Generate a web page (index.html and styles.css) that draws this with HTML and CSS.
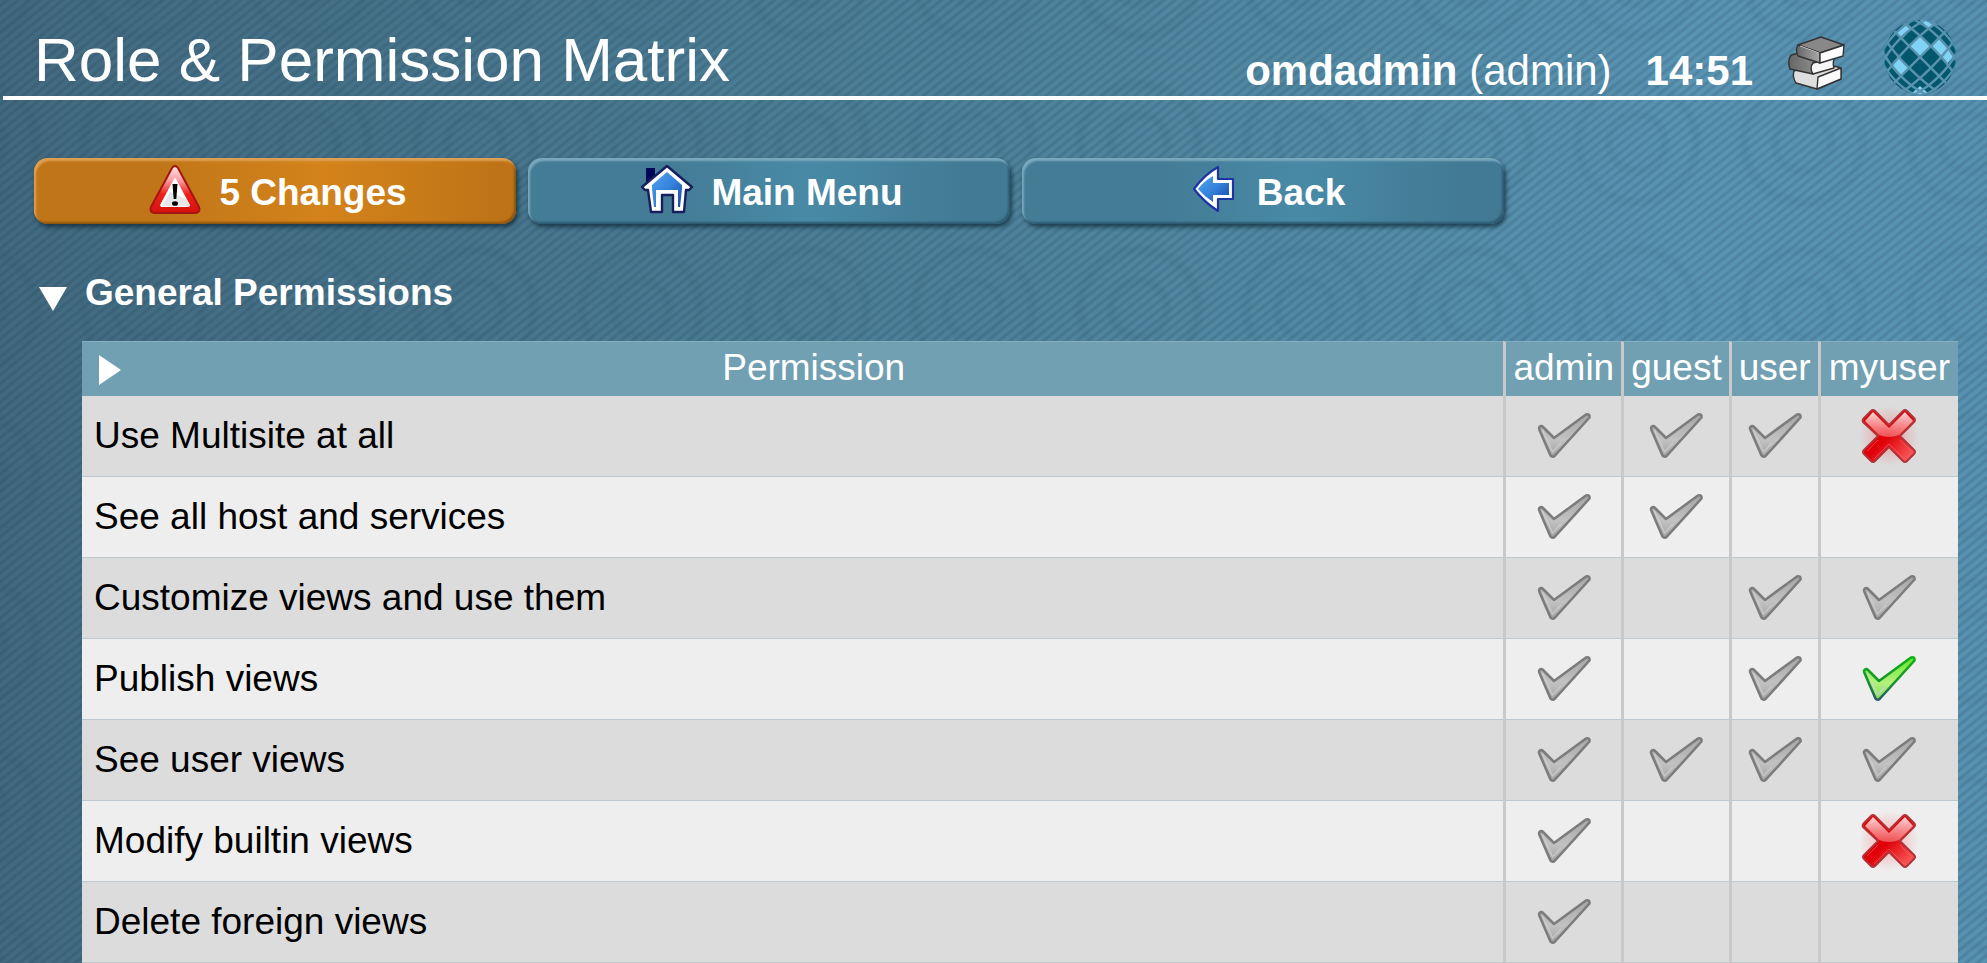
FILE: index.html
```html
<!DOCTYPE html>
<html lang="en">
<head>
<meta charset="utf-8">
<title>Role &amp; Permission Matrix</title>
<meta name="viewport" content="width=device-width, initial-scale=1">
<link rel="stylesheet" href="styles.css">
</head>
<body>
<svg class="defs" width="0" height="0" aria-hidden="true">
  <defs>
    <linearGradient id="gray" x1="0" y1="0" x2="0" y2="1"><stop offset="0" stop-color="#a6a6a6"/><stop offset=".6" stop-color="#c2c2c2"/><stop offset="1" stop-color="#a2a2a2"/></linearGradient>
    <linearGradient id="green" x1="0" y1="0" x2="0" y2="1"><stop offset="0" stop-color="#5fe62c"/><stop offset=".6" stop-color="#b4f27c"/><stop offset="1" stop-color="#79d860"/></linearGradient>
    <linearGradient id="green-edge" x1="0" y1="0" x2="0" y2="1"><stop offset="0" stop-color="#12b012"/><stop offset=".55" stop-color="#15952a"/><stop offset="1" stop-color="#2c5868"/></linearGradient>
    <linearGradient id="red" x1="0" y1="0" x2="1" y2="1"><stop offset="0" stop-color="#e80000"/><stop offset=".5" stop-color="#e00008"/><stop offset=".9" stop-color="#f85858"/></linearGradient>
    <linearGradient id="gloss" x1="0" y1="0" x2="0" y2="1"><stop offset="0" stop-color="#fff" stop-opacity=".85"/><stop offset="1" stop-color="#ffa0a0" stop-opacity=".5"/></linearGradient>
    <linearGradient id="warn" x1="0" y1="0" x2="0" y2="1"><stop offset="0" stop-color="#ffe6e6"/><stop offset=".3" stop-color="#fb9ea4"/><stop offset=".6" stop-color="#ee2018"/><stop offset="1" stop-color="#d5120c"/></linearGradient>
    <linearGradient id="blue" x1="0" y1="0" x2="1" y2="1"><stop offset="0" stop-color="#4fa3f2"/><stop offset=".5" stop-color="#3583dc"/><stop offset="1" stop-color="#1548a8"/></linearGradient>
    <linearGradient id="cover" x1="0" y1="0" x2="1" y2="0"><stop offset="0" stop-color="#666"/><stop offset="1" stop-color="#aaa"/></linearGradient>
    <radialGradient id="glow"><stop offset=".5" stop-color="#f00" stop-opacity=".14"/><stop offset="1" stop-color="#f00" stop-opacity="0"/></radialGradient>
    <symbol id="tick" viewBox="0 0 56 48">
      <path d="M3.500 15Q5.500 13 7.500 15.500L18 26L50 2.500Q54 1.500 53.500 5.500L19 43.500Q16.500 46 14.500 43.500L3.500 18Q2.500 16 3.500 15Z" stroke-width="2.600" stroke-linejoin="round"/>
      <path class="tick-shine" d="M6.500 18L16.500 40L25 31" fill="none" stroke-width="1.500"/>
    </symbol>
    <symbol id="cross" viewBox="0 0 60 60">
      <circle cx="30" cy="30" r="30" fill="url(#glow)"/>
      <path d="M4 16Q3 14 5 12L12 5Q14 3 16 5L30 19L44 5Q46 3 48 5L55 12Q57 14 55 16L41 30L55 44Q57 46 55 48L48 55Q46 57 44 55L30 41L16 55Q14 57 12 55L5 48Q3 46 5 44L19 30Z" fill="url(#red)" stroke="#b23238" stroke-width="2" stroke-linejoin="round"/>
      <path d="M6 15L14 6L30 22L46 6L54 15L40 29Q30 33 20 29Z" fill="url(#gloss)"/>
      <path d="M8 45L19 34M52 45L41 34M15 53L30 38L45 53" fill="none" stroke="#ff7070" stroke-opacity=".5"/>
    </symbol>
  </defs>
</svg>

<header class="top">
  <h1 class="title">Role &amp; Permission Matrix</h1>
  <div class="status">
    <span class="user"><b>omdadmin</b> (admin)</span>
    <b class="clock">14:51</b>
    <svg class="books" viewBox="0 0 60 56" role="img" aria-label="Documentation">
      <g stroke="#333" stroke-width="1.400" stroke-linejoin="round">
        <path d="M7 35L32 26L54 32V43L30 53L9 47Q5 41 7 35Z" fill="#dedede"/>
        <path d="M31 41L54 32V43L30 53Z" fill="#fafafa"/>
        <path d="M4 19Q0 25 3 33L26 38Q23 32 26 27L48 21L22 15L8 18Z" fill="url(#cover)"/>
        <path d="M26 27L48 21Q45 26 47 32L26 38Q22 32 26 27Z" fill="#f6f6f6"/>
        <path d="M11 9L34 1L57 9L33 17Z" fill="#888"/>
        <path d="M11 9L33 17V27L11 20Q8 14 11 9Z" fill="url(#cover)"/>
        <path d="M33 17L57 9L56 20L33 27Z" fill="#fff"/>
      </g>
      <path d="M13 10L32 17" stroke="#ccc" fill="none"/>
    </svg>
    <svg class="globe" viewBox="0 0 72 74" role="img" aria-label="Check_MK">
      <clipPath id="ball"><ellipse cx="36" cy="37" rx="36" ry="37"/></clipPath>
      <g clip-path="url(#ball)">
        <rect width="72" height="74" fill="#03576c"/>
        <g fill="#80d3f5">
          <path d="M25 26L36 15L47 26L36 37Z"/>
          <path d="M47 26L54 18L64 29L57 37Z"/>
          <path d="M57 37L64 29L69 37L63 44Z"/>
          <path d="M25 48L15 37L8 45L18 56Z"/>
          <path d="M18 19L12 13L22 2L28 8Z"/>
          <path d="M44 8L36 0H50L54 4Z"/>
          <path d="M28 73L36 66L44 73V76H28Z"/>
        </g>
        <g fill="none" stroke="#5a93ae" stroke-width="2.400" transform="translate(36 37)">
          <g transform="rotate(45)"><path d="M-40 0H40"/><ellipse rx="60" ry="15.500"/><ellipse rx="54" ry="27"/><ellipse rx="50" ry="34"/></g>
          <g transform="rotate(-45)"><path d="M-40 0H40"/><ellipse rx="60" ry="15.500"/><ellipse rx="54" ry="27"/><ellipse rx="50" ry="34"/></g>
        </g>
      </g>
    </svg>
  </div>
</header>

<nav class="actions">
  <button class="action action-alert" type="button">
    <svg class="action-icon" viewBox="0 0 54 50" aria-hidden="true">
      <path d="M24 4Q27 0 30 4L51 43Q53 48 48 49H6Q1 48 3 43Z" fill="url(#warn)" stroke="#a31512" stroke-width="2"/>
      <path d="M26 15Q27 13 28 15L42 41Q42 43 40 43H14Q12 43 12 41Z" fill="#fff"/>
      <path d="M14 42L22 28Q36 34 39 36L42 42Z" fill="#ddd" opacity=".7"/>
      <path d="M24.500 20H29.500L28.300 35H25.700Z"/><ellipse cx="27" cy="39.500" rx="3" ry="2.300"/>
    </svg>
    <span>5 Changes</span>
  </button>
  <button class="action" type="button">
    <svg class="action-icon" viewBox="0 0 54 50" aria-hidden="true">
      <path d="M7 5H14V14L7 20Z" fill="#000858" stroke="#000858" stroke-width="2"/>
      <path d="M27 2L52 23L49 26H46L44 48H33V31H22V48H11L8 26H5L2 23Z" fill="#fff" stroke="#17205f" stroke-width="2.400" stroke-linejoin="round"/>
      <path d="M27 8L42 21V25L40 43H38V26H16V43H14L12 25V21Z" fill="url(#blue)"/>
    </svg>
    <span>Main Menu</span>
  </button>
  <button class="action" type="button">
    <svg class="action-icon" viewBox="0 0 54 50" aria-hidden="true">
      <path d="M32 3V15H47V35H32V47Q18 38 8 25Q18 11 32 3Z" fill="#fff" stroke="#1c34a4" stroke-width="2.200" stroke-linejoin="round"/>
      <path d="M27 12V19H43V31H27V38Q18 32 12 25Q18 17 27 12Z" fill="url(#blue)"/>
    </svg>
    <span>Back</span>
  </button>
</nav>

<main class="section">
  <h2 class="section-title">
    <svg class="fold" viewBox="0 0 28 24" aria-hidden="true"><path d="M0 0H28L14 24Z" fill="#fff"/></svg>
    General Permissions
  </h2>
  <table class="matrix">
    <thead>
      <tr>
        <th class="name" scope="col"><div class="name-head"><svg class="expand" viewBox="0 0 22 30" aria-hidden="true"><path d="M0 0L22 15L0 30Z" fill="#fff"/></svg><span>Permission</span></div></th>
        <th scope="col">admin</th><th scope="col">guest</th><th scope="col">user</th><th scope="col">myuser</th>
      </tr>
    </thead>
    <tbody>
      <tr><td class="name">Use Multisite at all</td><td><svg class="tick"><use href="#tick"/></svg></td><td><svg class="tick"><use href="#tick"/></svg></td><td><svg class="tick"><use href="#tick"/></svg></td><td><svg class="cross"><use href="#cross"/></svg></td></tr>
      <tr><td class="name">See all host and services</td><td><svg class="tick"><use href="#tick"/></svg></td><td><svg class="tick"><use href="#tick"/></svg></td><td></td><td></td></tr>
      <tr><td class="name">Customize views and use them</td><td><svg class="tick"><use href="#tick"/></svg></td><td></td><td><svg class="tick"><use href="#tick"/></svg></td><td><svg class="tick"><use href="#tick"/></svg></td></tr>
      <tr><td class="name">Publish views</td><td><svg class="tick"><use href="#tick"/></svg></td><td></td><td><svg class="tick"><use href="#tick"/></svg></td><td><svg class="tick tick-on"><use href="#tick"/></svg></td></tr>
      <tr><td class="name">See user views</td><td><svg class="tick"><use href="#tick"/></svg></td><td><svg class="tick"><use href="#tick"/></svg></td><td><svg class="tick"><use href="#tick"/></svg></td><td><svg class="tick"><use href="#tick"/></svg></td></tr>
      <tr><td class="name">Modify builtin views</td><td><svg class="tick"><use href="#tick"/></svg></td><td></td><td></td><td><svg class="cross"><use href="#cross"/></svg></td></tr>
      <tr><td class="name">Delete foreign views</td><td><svg class="tick"><use href="#tick"/></svg></td><td></td><td></td><td></td></tr>
    </tbody>
  </table>
</main>
</body>
</html>
```

FILE: styles.css
```css
* { box-sizing: border-box; }

html { height: 100%; overflow: hidden; }

body {
  margin: 0;
  min-height: 100%;
  font-family: "Liberation Sans", Arial, sans-serif;
  font-size: 37px;
  color: #fff;
  background:
    repeating-linear-gradient(141deg, rgba(20, 50, 70, 0) 0 2px, rgba(20, 50, 70, .16) 4px 5px, rgba(20, 50, 70, 0) 7px),
    radial-gradient(circle, transparent 22px, rgba(20, 60, 80, .05) 26px 30px, transparent 34px 52px, rgba(20, 60, 80, .05) 57px 61px, transparent 66px) 60px 60px / 166px 166px,
    linear-gradient(90deg, #42697f 0%, #4a7c94 38%, #5289a3 65%, #5a94b3 85%, #5892b1 100%);
}

.defs { position: absolute; }

.top {
  display: flex;
  justify-content: space-between;
  align-items: flex-end;
  height: 100px;
  margin-left: 3px;
  padding: 0 31px;
  border-bottom: 4px solid #fff;
}

.title {
  margin: 0;
  font-size: 62px;
  font-weight: 400;
  line-height: 56px;
  padding-bottom: 8px;
}

.status {
  display: flex;
  align-items: flex-end;
  font-size: 42px;
  line-height: 50px;
}

.clock { margin-left: 34px; }
.books { width: 60px; height: 56px; margin: 0 0 4px 34px; }
.globe { width: 72px; height: 74px; margin: 0 0 2px 37px; }

.actions {
  display: flex;
  gap: 12px;
  margin: 58px 0 0 34px;
}

.action {
  display: flex;
  align-items: center;
  justify-content: center;
  gap: 17px;
  width: 482px;
  height: 66px;
  padding: 0 0 4px 5px;
  border: 0;
  border-radius: 14px;
  font: bold 37px/44px "Liberation Sans", Arial, sans-serif;
  color: #fff;
  background: linear-gradient(90deg, #447c96 0%, #447c96 30%, #488aa6 58%, #427a94 90%);
  box-shadow: inset 2px 3px 2px #7aa9bd, inset -2px -2px 2px #2d5c72, 2px 3px 4px rgba(10, 35, 50, .7);
}

.action span { padding-top: 7px; }

.action-alert {
  background: linear-gradient(90deg, #c07618 0%, #c07618 25%, #d4831b 60%, #be7416 96%);
  box-shadow: inset 2px 3px 2px #dfa052, inset -2px -2px 2px #8f560d, 2px 3px 4px rgba(10, 35, 50, .7);
}

.action-icon { width: 54px; height: 50px; }

.section { padding: 44px 29px 0 39px; }

.section-title {
  display: flex;
  align-items: center;
  gap: 18px;
  margin: 0;
  font-size: 37px;
  line-height: 50px;
}

.fold { width: 28px; height: 24px; margin-top: 12px; }

.matrix {
  width: calc(100% - 43px);
  margin: 23px 0 0 43px;
  border-collapse: separate;
  border-spacing: 0;
}

.matrix th, .matrix td {
  padding: 0 7px;
  border-left: 3px solid #c9c9c9;
  text-align: center;
}

.matrix th:last-child { padding: 0 8px; }

.matrix th {
  height: 55px;
  padding-bottom: 3px;
  font-weight: 400;
  line-height: 44px;
  background: #71a0b3;
  border-top: 1px solid #86afbf;
}

.matrix th:last-child { padding-bottom: 3px; }

.matrix td {
  height: 81px;
  border-bottom: 1px solid #bccad0;
  color: #000;
}

.matrix .name {
  width: 100%;
  border-left: 0;
}

.matrix td.name {
  padding: 0 12px;
  text-align: left;
}

.name-head { display: flex; align-items: center; gap: 10px; padding-left: 10px; }
.name-head span { flex: 1; }
.expand { width: 22px; height: 30px; margin-top: 4px; }

.matrix tbody tr { background: #dcdcdc; }
.matrix tbody tr:nth-child(even) { background: #eee; }

.tick, .cross { display: block; margin: 0 auto; }
.tick { width: 56px; height: 48px; fill: url(#gray); stroke: #7c7c7c; }
.tick-shine { stroke: #d6d6d6; stroke-opacity: .6; }
.tick-on { fill: url(#green); stroke: url(#green-edge); }
.cross { width: 60px; height: 60px; }
```
